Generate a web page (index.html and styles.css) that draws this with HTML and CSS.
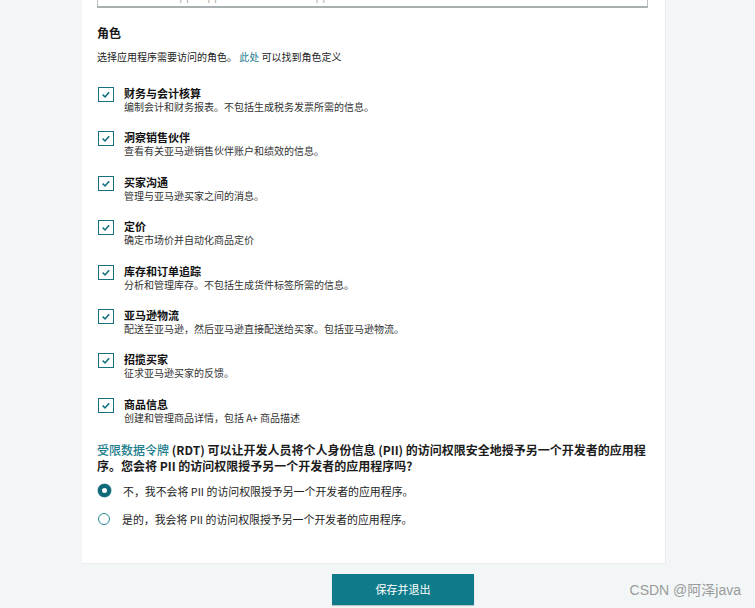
FILE: index.html
```html
<!DOCTYPE html>
<html lang="zh-CN">
<head>
<meta charset="utf-8">
<title>角色</title>
<link rel="stylesheet" href="styles.css">
</head>
<body>
<div class="page">
  <div class="card">
    <div class="input">amzn1.sellerapps.app.0000-1234-abcd-appname</div>
    <h2 class="heading">角色</h2>
    <p class="intro">选择应用程序需要访问的角色。 <a class="link">此处</a> 可以找到角色定义</p>
    <ul class="roles">
      <li class="role"><span class="cb"><svg viewBox="0 0 16 16" width="15" height="15"><path d="M4.2 8.2 L6.9 10.8 L11.6 5.3" fill="none" stroke="#0f6e7c" stroke-width="1.8"/></svg></span><div class="role-text"><div class="role-title">财务与会计核算</div><div class="role-desc">编制会计和财务报表。不包括生成税务发票所需的信息。</div></div></li>
      <li class="role"><span class="cb"><svg viewBox="0 0 16 16" width="15" height="15"><path d="M4.2 8.2 L6.9 10.8 L11.6 5.3" fill="none" stroke="#0f6e7c" stroke-width="1.8"/></svg></span><div class="role-text"><div class="role-title">洞察销售伙伴</div><div class="role-desc">查看有关亚马逊销售伙伴账户和绩效的信息。</div></div></li>
      <li class="role"><span class="cb"><svg viewBox="0 0 16 16" width="15" height="15"><path d="M4.2 8.2 L6.9 10.8 L11.6 5.3" fill="none" stroke="#0f6e7c" stroke-width="1.8"/></svg></span><div class="role-text"><div class="role-title">买家沟通</div><div class="role-desc">管理与亚马逊买家之间的消息。</div></div></li>
      <li class="role"><span class="cb"><svg viewBox="0 0 16 16" width="15" height="15"><path d="M4.2 8.2 L6.9 10.8 L11.6 5.3" fill="none" stroke="#0f6e7c" stroke-width="1.8"/></svg></span><div class="role-text"><div class="role-title">定价</div><div class="role-desc">确定市场价并自动化商品定价</div></div></li>
      <li class="role"><span class="cb"><svg viewBox="0 0 16 16" width="15" height="15"><path d="M4.2 8.2 L6.9 10.8 L11.6 5.3" fill="none" stroke="#0f6e7c" stroke-width="1.8"/></svg></span><div class="role-text"><div class="role-title">库存和订单追踪</div><div class="role-desc">分析和管理库存。不包括生成货件标签所需的信息。</div></div></li>
      <li class="role"><span class="cb"><svg viewBox="0 0 16 16" width="15" height="15"><path d="M4.2 8.2 L6.9 10.8 L11.6 5.3" fill="none" stroke="#0f6e7c" stroke-width="1.8"/></svg></span><div class="role-text"><div class="role-title">亚马逊物流</div><div class="role-desc">配送至亚马逊，然后亚马逊直接配送给买家。包括亚马逊物流。</div></div></li>
      <li class="role"><span class="cb"><svg viewBox="0 0 16 16" width="15" height="15"><path d="M4.2 8.2 L6.9 10.8 L11.6 5.3" fill="none" stroke="#0f6e7c" stroke-width="1.8"/></svg></span><div class="role-text"><div class="role-title">招揽买家</div><div class="role-desc">征求亚马逊买家的反馈。</div></div></li>
      <li class="role"><span class="cb"><svg viewBox="0 0 16 16" width="15" height="15"><path d="M4.2 8.2 L6.9 10.8 L11.6 5.3" fill="none" stroke="#0f6e7c" stroke-width="1.8"/></svg></span><div class="role-text"><div class="role-title">商品信息</div><div class="role-desc">创建和管理商品详情，包括 A+ 商品描述</div></div></li>
    </ul>
    <p class="question"><a class="link qlink">受限数据令牌</a> (RDT) 可以让开发人员将个人身份信息 (PII) 的访问权限安全地授予另一个开发者的应用程序。您会将 PII 的访问权限授予另一个开发者的应用程序吗?</p>
    <div class="radios">
      <label class="radio-row"><span class="radio checked"></span><span>不，我不会将 PII 的访问权限授予另一个开发者的应用程序。</span></label>
      <label class="radio-row"><span class="radio"></span><span>是的，我会将 PII 的访问权限授予另一个开发者的应用程序。</span></label>
    </div>
  </div>
  <div class="actions">
    <button class="save">保存并退出</button>
  </div>
  <div class="watermark">CSDN @阿泽java</div>
</div>
</body>
</html>
```

FILE: styles.css
```css
* { box-sizing: border-box; }
html, body { margin: 0; padding: 0; }
body {
  background: #f2f6f7;
  font-family: "Noto Sans CJK SC", "Noto Sans", sans-serif;
  color: #161616;
  overflow: hidden;
}
.page {
  position: relative;
  display: flow-root;
  width: 755px;
  height: 608px;
}
.card {
  margin-left: 82px;
  width: 584px;
  margin-top: -24px;
  background: #ffffff;
  border-right: 1px solid #e6ebec;
  border-bottom: 1px solid #e6ebec;
  padding: 0 17px 36px 15px;
}
.input {
  height: 32px;
  border: 1px solid #b9bfc1;
  border-bottom: 2px solid #a9b0b2;
  border-top: none;
  color: #b3b3b3;
  font-size: 11px;
  line-height: 14px;
  padding: 12px 10px 0;
  overflow: hidden;
}
.heading {
  margin: 17px 0 0;
  font-size: 12px;
  line-height: 16px;
  font-weight: 700;
}
.intro {
  margin: 9px 0 0;
  font-size: 10px;
  line-height: 14px;
  color: #222;
}
.link { color: #1b7d8c; }
.roles {
  list-style: none;
  margin: 22px 0 0;
  padding: 0;
  display: flex;
  flex-direction: column;
  gap: 16.4px;
}
.role {
  display: flex;
  align-items: flex-start;
  gap: 10px;
}
.cb {
  width: 16px;
  height: 15px;
  margin-left: 1px;
  margin-top: 1px;
  border: 1.5px solid #167080;
  display: flex;
  align-items: center;
  justify-content: center;
  flex: none;
}
.cb svg { display: block; }
.role-title {
  font-size: 11px;
  line-height: 14px;
  font-weight: 700;
  color: #111;
}
.role-desc {
  font-size: 10px;
  line-height: 14px;
  color: #333;
}
.question {
  margin: 17px 0 0;
  font-size: 12px;
  line-height: 16.5px;
  font-weight: 700;
  color: #1c1c1c;
}
.qlink { font-weight: 500; }
.radios {
  margin-top: 8px;
  display: flex;
  flex-direction: column;
  gap: 12px;
}
.radio-row {
  display: flex;
  align-items: center;
  gap: 12px;
  font-size: 10.9px;
  line-height: 16px;
  color: #1e1e1e;
}
.radio {
  width: 12px;
  height: 12px;
  margin-left: 1px;
  border-radius: 50%;
  border: 1.3px solid #2a8b99;
  background: #fff;
  flex: none;
}
.radio.checked {
  width: 13px;
  height: 13px;
  margin-left: 1px;
  border: 4.3px solid #0f6878;
  box-shadow: 0 0 0 0.5px #4b8f9a;
}
.actions {
  margin-top: 10px;
  padding-left: 332px;
}
.save {
  display: block;
  width: 142px;
  height: 31px;
  border: none;
  background: #0f7b8a;
  color: #fff;
  font-family: "Noto Sans CJK SC", sans-serif;
  font-size: 11px;
  box-shadow: 0 1px 1px rgba(0,0,0,0.2);
  cursor: pointer;
}
.watermark {
  position: absolute;
  right: 14px;
  bottom: 9px;
  font-family: "Liberation Sans", "Noto Sans CJK SC", sans-serif;
  font-size: 14px;
  color: #9b9b9b;
}
```
